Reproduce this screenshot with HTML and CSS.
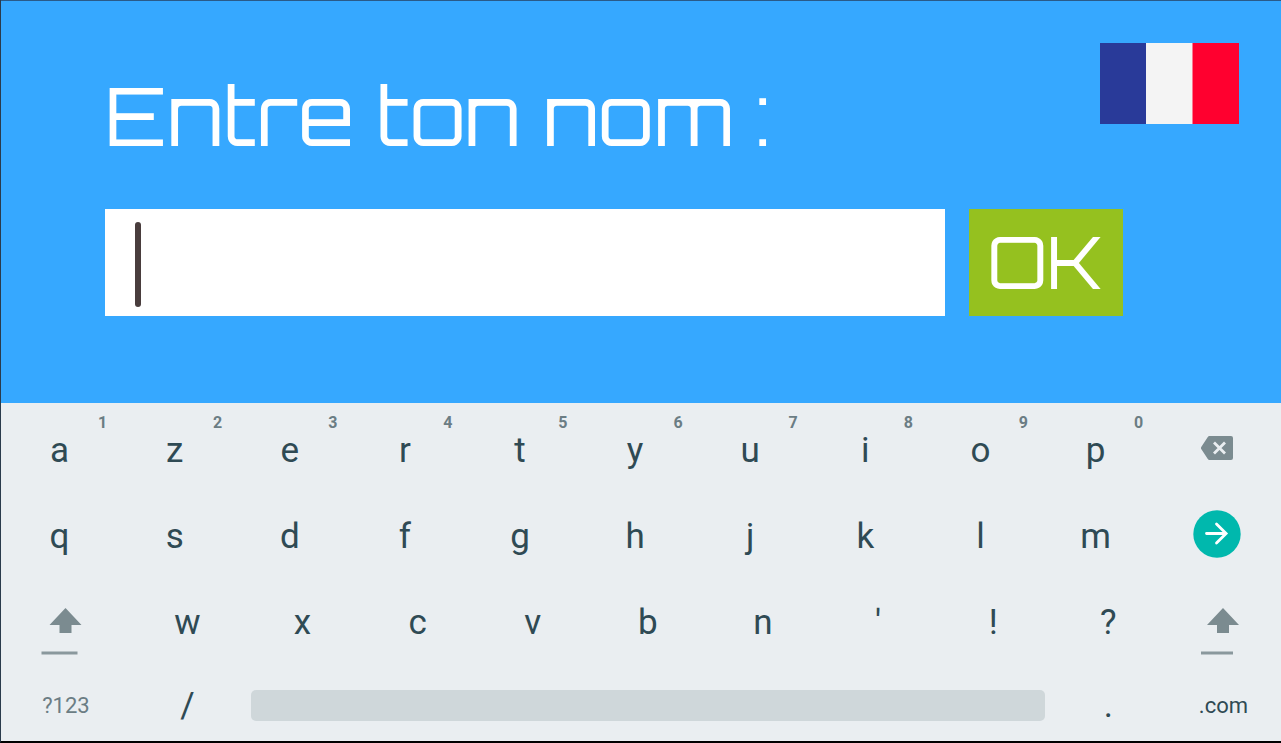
FILE: index.html
```html
<!DOCTYPE html>
<html lang="fr">
<head>
<meta charset="utf-8">
<meta name="viewport" content="width=device-width, initial-scale=1">
<title>Entre ton nom</title>
<link rel="stylesheet" href="styles.css">
</head>
<body>
<div class="app">
  <main class="entry">
    <div class="entry-head">
      <label class="entry-title" for="name">Entre ton nom :</label>
      <svg class="flag" viewBox="0 0 139 81" preserveAspectRatio="none" role="img" aria-label="Français">
        <rect width="139" height="81" fill="#f4f4f4"/>
        <rect width="46" height="81" fill="#293a99"/>
        <rect x="92.500" width="46.500" height="81" fill="#ff002f"/>
      </svg>
    </div>
    <form class="entry-form">
      <div class="field">
        <input class="field-input" id="name" type="text" autocomplete="off">
        <span class="caret"></span>
      </div>
      <button class="ok" type="button">OK</button>
    </form>
  </main>

  <section class="keyboard" aria-label="Clavier">
    <div class="row row-letters">
      <button class="key" type="button">a<span class="hint">1</span></button>
      <button class="key" type="button">z<span class="hint">2</span></button>
      <button class="key" type="button">e<span class="hint">3</span></button>
      <button class="key" type="button">r<span class="hint">4</span></button>
      <button class="key" type="button">t<span class="hint">5</span></button>
      <button class="key" type="button">y<span class="hint">6</span></button>
      <button class="key" type="button">u<span class="hint">7</span></button>
      <button class="key" type="button">i<span class="hint">8</span></button>
      <button class="key" type="button">o<span class="hint">9</span></button>
      <button class="key" type="button">p<span class="hint">0</span></button>
      <button class="key key-icon" type="button" aria-label="Effacer">
        <svg width="32" height="26" viewBox="0 0 32 26">
          <path d="M8.500 1H30a2 2 0 0 1 2 2v20a2 2 0 0 1-2 2H8.500a2 2 0 0 1-1.700-1L.4 14.200a2 2 0 0 1 0-2.400L6.800 2a2 2 0 0 1 1.700-1z" fill="#7b8b90"/>
          <path d="M13 7.500l11 11M24 7.500l-11 11" stroke="#eaeef1" stroke-width="2.800"/>
        </svg>
      </button>
    </div>

    <div class="row row-letters">
      <button class="key" type="button">q</button>
      <button class="key" type="button">s</button>
      <button class="key" type="button">d</button>
      <button class="key" type="button">f</button>
      <button class="key" type="button">g</button>
      <button class="key" type="button">h</button>
      <button class="key" type="button">j</button>
      <button class="key" type="button">k</button>
      <button class="key" type="button">l</button>
      <button class="key" type="button">m</button>
      <button class="key key-icon" type="button" aria-label="Valider">
        <svg width="48" height="48" viewBox="0 0 48 48">
          <circle cx="24" cy="24" r="23.700" fill="#00b8ad"/>
          <path d="M13.500 23.500H33M23.500 14l9.600 9.500-9.600 9.500" fill="none" stroke="#fff" stroke-width="2.800" stroke-linecap="round"/>
        </svg>
      </button>
    </div>

    <div class="row row-shift">
      <button class="key key-shift" type="button" aria-label="Majuscule">
        <svg width="48" height="50" viewBox="0 0 48 50">
          <path d="M23.500 3L39.500 20H29.500v8H17.500v-8H7.500z" fill="#7b8b90"/>
          <path d="M-.5 48H35.500" stroke="#8a989d" stroke-width="3"/>
        </svg>
      </button>
      <button class="key" type="button">w</button>
      <button class="key" type="button">x</button>
      <button class="key" type="button">c</button>
      <button class="key" type="button">v</button>
      <button class="key" type="button">b</button>
      <button class="key" type="button">n</button>
      <button class="key" type="button">'</button>
      <button class="key" type="button">!</button>
      <button class="key" type="button">?</button>
      <button class="key key-shift" type="button" aria-label="Majuscule droite">
        <svg width="48" height="50" viewBox="0 0 48 50">
          <path d="M24 3L40 20H30v8H18v-8H8z" fill="#7b8b90"/>
          <path d="M2 48H34" stroke="#8a989d" stroke-width="3"/>
        </svg>
      </button>
    </div>

    <div class="row row-space">
      <button class="key key-small key-muted" type="button">?123</button>
      <button class="key" type="button">/</button>
      <button class="space" type="button" aria-label="Espace"></button>
      <button class="key" type="button">.</button>
      <button class="key key-small" type="button">.com</button>
    </div>
  </section>
</div>
</body>
</html>
```

FILE: styles.css
```css
* {
  box-sizing: border-box;
}

body {
  margin: 0;
  background: #000;
}

button {
  padding: 0;
  border: 0;
  background: none;
  font: inherit;
  color: inherit;
  cursor: pointer;
}

.app {
  display: flex;
  flex-direction: column;
  min-height: 100vh;
  border-left: 1px solid #2a3b4c;
  border-bottom: 2px solid #000;
}

/* Name entry */

.entry {
  padding: 42px 42px 87px 104px;
  border-top: 1px solid #2a5a88;
  background: #36a8ff;
}

.entry-head {
  display: flex;
  justify-content: space-between;
  align-items: flex-start;
}

.entry-title {
  padding-top: 20px;
  font-family: Orbitron, "DejaVu Sans", sans-serif;
  font-size: 81px;
  line-height: 104px;
  color: #fff;
}

.flag {
  flex: none;
  width: 139px;
  height: 81px;
}

.entry-form {
  display: flex;
  gap: 24px;
  margin: 42px 116px 0 0;
}

.field {
  position: relative;
  flex: 1;
}

.field-input {
  display: block;
  width: 100%;
  height: 107px;
  padding: 0 30px;
  border: 0;
  border-radius: 0;
  outline: 0;
  background: #fff;
  font-family: Orbitron, "DejaVu Sans", sans-serif;
  font-size: 72px;
  color: #493d3d;
}

.caret {
  position: absolute;
  top: 13px;
  left: 30px;
  width: 6px;
  height: 85px;
  border-radius: 3px;
  background: #493d3d;
}

.ok {
  width: 154px;
  padding-bottom: 4px;
  background: #95c11f;
  font-family: Orbitron, "DejaVu Sans", sans-serif;
  font-size: 72px;
  line-height: 88px;
  color: #fff;
}

/* Keyboard */

.keyboard {
  display: flex;
  flex: 1;
  flex-direction: column;
  padding: 4px 0 0 1px;
  background: #eaeef1;
  font-family: Roboto, sans-serif;
  font-size: 35px;
  color: #2f4a54;
}

.row {
  display: grid;
  min-height: 86px;
}

.row-letters {
  grid-template-columns: repeat(10, 9fr) 10fr;
}

.row-shift {
  grid-template-columns: 10fr repeat(10, 9fr);
}

.row-space {
  grid-template-columns: 10fr 9fr 63fr 9fr 9fr;
  flex: 1;
  min-height: 76px;
  padding-top: 5px;
}

.key {
  position: relative;
  display: flex;
  justify-content: center;
  align-items: center;
  min-width: 0;
}

.key-icon {
  padding-bottom: 4px;
}

.key-shift {
  padding-top: 16px;
}

.key-shift svg {
  overflow: visible;
}

.key-small {
  font-size: 22px;
}

.key-muted {
  color: #6b7d84;
}

.hint {
  position: absolute;
  top: 8px;
  right: 10px;
  font-size: 16px;
  font-weight: 700;
  line-height: 16px;
  color: #6b7d84;
}

.space {
  align-self: center;
  height: 31px;
  margin: 0 6px;
  border-radius: 5px;
  background: #cfd7da;
}
```
